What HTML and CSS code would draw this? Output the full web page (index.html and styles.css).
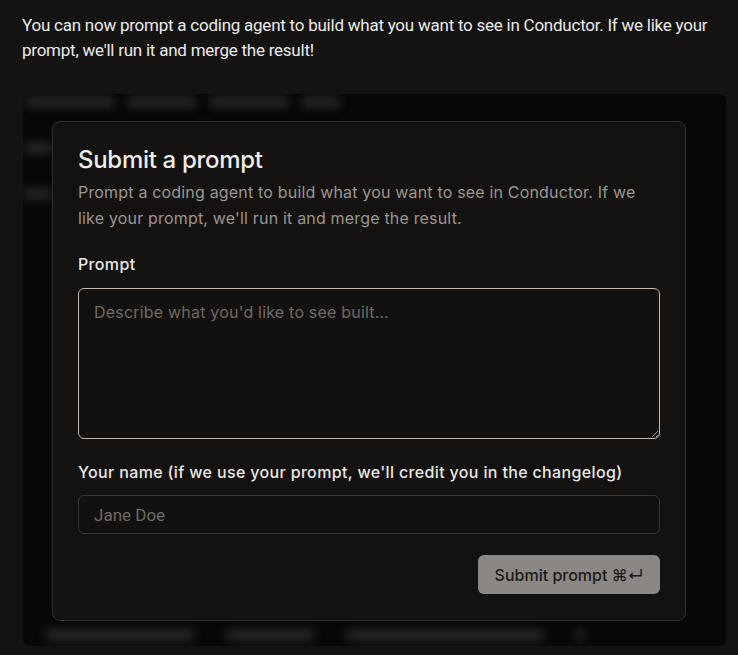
FILE: index.html
```html
<!DOCTYPE html>
<html>
<head lang="en">
    <meta charset="UTF-8">
    <title>Submit a prompt</title>
    <link rel="stylesheet" href="styles.css">
</head>
<body>
<div id="page">
    <p class="intro">You can now prompt a coding agent to build what you want to see in Conductor. If we like your prompt, we'll run it and merge the result!</p>

    <div id="shot">
        <div class="blur-top">
            <span class="blob w90"></span><span class="blob w70"></span><span class="blob w80"></span><span class="blob w40"></span>
        </div>
        <div class="blur-side">
            <span class="blob w30"></span>
            <span class="blob w30"></span>
        </div>

        <div id="modal">
            <h2 class="title">Submit a prompt</h2>
            <p class="desc">Prompt a coding agent to build what you want to see in Conductor. If we like your prompt, we'll run it and merge the result.</p>

            <label class="label" for="prompt">Prompt</label>
            <textarea id="prompt" class="area" placeholder="Describe what you'd like to see built…"></textarea>

            <label class="label" for="name">Your name (if we use your prompt, we'll credit you in the changelog)</label>
            <input id="name" class="field" type="text" placeholder="Jane Doe">

            <div class="actions">
                <button class="submit">Submit prompt ⌘↵</button>
            </div>
        </div>

        <div class="blur-bottom">
            <span class="blob w150"></span><span class="blob w90"></span><span class="blob w200"></span><span class="blob w10"></span>
        </div>
    </div>
</div>
</body>
</html>
```

FILE: styles.css
```css
* {
    margin: 0;
    padding: 0;
    box-sizing: border-box;
}

html, body {
    background: #141312;
}

body {
    width: 738px;
    height: 655px;
    overflow: hidden;
    font-family: Inter, "Noto Sans", sans-serif;
    color: #ebe8e5;
}

#page {
    padding: 13px 0 0 22px;
}

.intro {
    width: 700px;
    font-family: Roboto, "Liberation Sans", sans-serif;
    font-size: 17px;
    line-height: 25px;
    letter-spacing: -0.24px;
    color: #ecebea;
}

#shot {
    position: relative;
    width: 703px;
    height: 552px;
    margin-top: 31px;
    margin-left: 1px;
    background: #080706;
    border-radius: 6px;
    overflow: hidden;
    padding: 27px 40px 0 29px;
}

.blob {
    display: inline-block;
    height: 12px;
    border-radius: 6px;
    background: #282624;
    filter: blur(5px);
}

.w10 { width: 10px; }
.w30 { width: 30px; }
.w40 { width: 40px; }
.w70 { width: 70px; }
.w80 { width: 80px; }
.w90 { width: 90px; }
.w150 { width: 150px; }
.w200 { width: 200px; }

.blur-top {
    position: absolute;
    top: 2px;
    left: 2px;
    display: flex;
    gap: 12px;
}

.blur-side {
    position: absolute;
    top: 48px;
    left: 0;
    display: flex;
    flex-direction: column;
    gap: 34px;
}

.blur-bottom {
    position: absolute;
    bottom: 5px;
    left: 22px;
    display: flex;
    gap: 30px;
}

#modal {
    position: relative;
    background: #141210;
    border: 1px solid #302c29;
    border-radius: 8px;
    padding: 24px 25px 25px 25px;
    height: 500px;
}

.title {
    font-size: 24px;
    font-weight: 500;
    line-height: 28px;
    letter-spacing: -0.3px;
    color: #efedeb;
}

.desc {
    margin-top: 5px;
    font-size: 16px;
    line-height: 26px;
    letter-spacing: 0.18px;
    color: #9b9691;
}

.label {
    display: block;
    margin-top: 23px;
    font-size: 16px;
    font-weight: 500;
    line-height: 20px;
    letter-spacing: 0.35px;
    color: #ebe8e5;
}

.area {
    display: block;
    width: 100%;
    height: 151px;
    margin-top: 14px;
    background: #121110;
    border: 1.5px solid #c8b6ab;
    border-radius: 6px;
    padding: 12px 15px;
    font-family: Inter, "Noto Sans", sans-serif;
    font-size: 16px;
    line-height: 22px;
    letter-spacing: 0.2px;
    color: #ebe8e5;
    resize: vertical;
    outline: none;
}

.area::placeholder {
    color: #6f6a65;
}

.area + .label {
    margin-top: 23px;
}

.field {
    display: block;
    width: 100%;
    height: 39px;
    margin-top: 13px;
    background: #121110;
    border: 1px solid #3a3633;
    border-radius: 6px;
    padding: 0 15px;
    font-family: Roboto, "Liberation Sans", sans-serif;
    font-size: 17px;
    color: #ebe8e5;
    outline: none;
}

.field::placeholder {
    color: #6f6a65;
}

.actions {
    display: flex;
    justify-content: flex-end;
    margin-top: 21px;
}

.submit {
    height: 39px;
    width: 182px;
    border: none;
    border-radius: 6px;
    background: #8a8785;
    color: #1c1a18;
    font-family: Inter, "Noto Sans", sans-serif;
    font-size: 16px;
    font-weight: 500;
}
```
